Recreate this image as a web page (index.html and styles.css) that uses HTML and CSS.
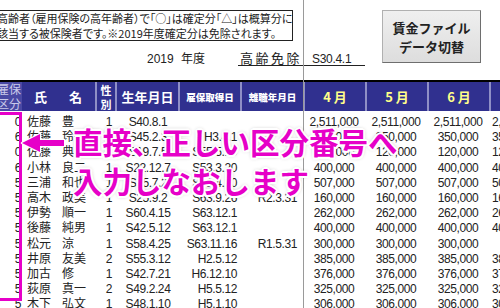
FILE: index.html
```html
<!DOCTYPE html>
<html lang="ja">
<head>
    <meta charset="UTF-8">
    <meta name="viewport" content="width=device-width, initial-scale=1.0">
    <title>賃金台帳</title>
    <link rel="stylesheet" href="styles.css">
</head>
<body>
    <div class="sheet">
        <div class="top">
            <div class="top-left">
                <div class="note">高齢者（雇用保険の高年齢者）で「○」は確定分「△」は概算分に<br>該当する被保険者です。※2019年度確定分は免除されます。</div>
                <div class="info">
                    <span class="year">2019 年度</span>
                    <span class="cell label">高齢免除</span>
                    <span class="cell value">S30.4.1</span>
                </div>
            </div>
            <button class="switch-btn">賃金ファイル<br>データ切替</button>
        </div>

        <div class="table">
            <div class="row head">
                <div class="h kbn">雇保<br>区分</div>
                <div class="h name-h"><span>氏</span><span>名</span></div>
                <div class="h sep sex-h">性<br>別</div>
                <div class="h sep">生年月日</div>
                <div class="h sep small">雇保取得日</div>
                <div class="h sep small">離職年月日</div>
                <div class="h sep month">4月</div>
                <div class="h sep month">5月</div>
                <div class="h sep month">6月</div>
                <div class="h sep month">7月</div>
            </div>
            <div class="rows" id="rows">
                <!-- se llena con JavaScript -->
            </div>
        </div>

        <div class="split"></div>
        <div class="mark"></div>
        <svg class="arrow" width="50" height="26" viewBox="0 0 50 26">
            <path d="M2 13 L20 4 L20 10 L44 10 L44 16 L20 16 L20 22 Z" fill="#e600c8" stroke="#fff" stroke-width="2.5" stroke-linejoin="round" paint-order="stroke"/>
        </svg>
        <div class="callout">直接、正しい区分番号へ<br>入力しなおします</div>
    </div>

    <script>
        const staff = [
            ['0', '佐藤', '豊', '1', 'S40.8.1', '', '', '2,511,000'],
            ['6', '佐藤', '玲子', '2', 'S45.2.3', 'H3.4.1', '', '350,000'],
            ['0', '佐藤', '典子', '2', 'S19.7.5', 'S55.5.10', '', '120,000'],
            ['6', '小林', '良二', '1', 'S22.12.7', 'S53.3.20', '', '400,000'],
            ['5', '三浦', '和也', '1', 'S35.7.2', 'S61.4.20', '', '507,000'],
            ['5', '高木', '政美', '1', 'S25.9.2', 'S63.9.26', 'R2.3.31', '160,000'],
            ['5', '伊勢', '順一', '1', 'S60.4.15', 'S63.12.1', '', '262,000'],
            ['5', '後藤', '純男', '1', 'S42.5.12', 'S63.12.1', '', '400,000'],
            ['5', '松元', '涼', '1', 'S58.4.25', 'S63.11.16', 'R1.5.31', '300,000'],
            ['5', '井原', '友美', '2', 'S55.3.12', 'H2.5.12', '', '385,000'],
            ['5', '加古', '修', '1', 'S42.7.21', 'H6.12.10', '', '376,000'],
            ['5', '荻原', '真一', '2', 'S49.2.24', 'H5.5.12', '', '325,000'],
            ['5', '木下', '弘文', '1', 'S48.1.10', 'H5.1.10', '', '306,000']
        ];

        const container = document.getElementById('rows');
        staff.forEach(s => {
            const row = document.createElement('div');
            row.className = 'row';
            // 離職していれば4か月目は空欄
            const last = s[6] === 'R1.5.31' ? '' : s[7];
            row.innerHTML = `
                <div class="c kbn">${s[0]}</div>
                <div class="c name"><span class="sei">${s[1]}</span><span>${s[2]}</span></div>
                <div class="c sex">${s[3]}</div>
                <div class="c birth">${s[4]}</div>
                <div class="c get">${s[5]}</div>
                <div class="c leave">${s[6]}</div>
                <div class="c m">${s[7]}</div>
                <div class="c m">${s[7]}</div>
                <div class="c m">${s[7]}</div>
                <div class="c m-last">${last}</div>
            `;
            container.appendChild(row);
        });
    </script>
</body>
</html>
```

FILE: styles.css
```css
body {
    margin: 0;
    width: 500px;
    height: 308px;
    overflow: hidden;
    background-color: #fff;
    font-family: "Liberation Sans", "Noto Sans CJK JP", sans-serif;
    color: #222;
}

.sheet {
    position: relative;
    height: 308px;
}

.top {
    display: flex;
    height: 80px;
}

.top-left {
    width: 382px;
}

.note {
    margin: 10px 0 0 -12px;
    width: 305px;
    height: 31px;
    box-sizing: border-box;
    border: 1px solid #222;
    padding-left: 8px;
    font-family: "Noto Sans CJK JP", sans-serif;
    font-size: 11px;
    line-height: 14.5px;
    white-space: nowrap;
    font-feature-settings: "palt";
}

.info {
    display: flex;
    align-items: flex-end;
    margin-top: 10px;
    height: 15px;
    font-size: 12px;
    white-space: nowrap;
}

.year {
    margin-left: 147px;
    width: 91px;
    word-spacing: 4px;
    font-size: 12px;
}

.cell {
    height: 14px;
    line-height: 14px;
    border-bottom: 1px solid #222;
}

.label {
    width: 65px;
    padding-left: 2px;
    box-sizing: border-box;
    font-size: 13px;
    letter-spacing: 2.5px;
}

.value {
    width: 62px;
    padding-left: 9px;
    box-sizing: border-box;
    letter-spacing: -0.3px;
}

.switch-btn {
    width: 99px;
    height: 53px;
    margin-top: 10px;
    padding: 0;
    background: linear-gradient(#efefef, #dddddd);
    border: 1px solid #b0b0b0;
    border-right-color: #6e6e6e;
    border-bottom-color: #6e6e6e;
    font-family: "Noto Sans CJK JP", sans-serif;
    font-weight: 700;
    font-size: 13px;
    line-height: 19px;
    color: #222;
}

.table {
    margin-left: -8px;
    border-top: 2px solid #000;
}

.row {
    display: grid;
    grid-template-columns: 30px 73px 20px 63px 62px 63px 62px 62px 62px 62px;
    height: 15.2px;
}

.head {
    height: 29px;
    background-color: #30308f;
    color: #fff;
}

.h {
    display: flex;
    align-items: center;
    justify-content: center;
    font-family: "Noto Sans CJK JP", sans-serif;
    font-weight: 700;
    font-size: 13px;
    white-space: nowrap;
    box-sizing: border-box;
}

.h.sep {
    border-left: 2px solid #8f8fc6;
}

.h.kbn {
    justify-content: flex-end;
    text-align: right;
    padding-right: 1px;
    background-color: #4949a4;
    color: #c9c9ea;
    font-weight: 400;
    font-size: 12px;
    line-height: 14.5px;
}

.name-h {
    justify-content: flex-start !important;
    gap: 22px;
    padding-left: 12px;
}

.sex-h {
    font-size: 11px;
    line-height: 14px;
    text-align: center;
}

.h.small {
    font-size: 9.5px;
    font-weight: 900;
}

.h.month {
    color: #ffff8a;
    font-size: 13px;
    letter-spacing: 3px;
    padding-left: 3px;
}

.rows {
    padding-top: 4px;
}

.c {
    font-size: 12px;
    line-height: 15.2px;
    white-space: nowrap;
    letter-spacing: -0.4px;
    box-sizing: border-box;
}

.c.kbn {
    text-align: right;
    padding-right: 1px;
}

.c.name {
    display: flex;
    padding-left: 5px;
    letter-spacing: 0;
}

.sei {
    width: 35px;
}

.c.sex {
    text-align: right;
    padding-right: 3px;
}

.c.birth {
    text-align: center;
    padding-left: 3px;
}

.c.get {
    text-align: right;
    padding-right: 3px;
    direction: rtl;
}

.c.leave {
    text-align: right;
    padding-right: 6px;
}

.c.m {
    text-align: center;
}

.c.m-last {
    padding-left: 3px;
}

.split {
    position: absolute;
    left: 303px;
    top: 0;
    bottom: 0;
    width: 1px;
    background-color: #9a9a9a;
}

.mark {
    position: absolute;
    left: -10px;
    top: 112px;
    width: 32px;
    height: 189px;
    box-sizing: border-box;
    border: 3px solid #e600c8;
}

.arrow {
    position: absolute;
    left: 20px;
    top: 130px;
}

.callout {
    position: absolute;
    left: 73px;
    top: 122px;
    font-family: "Noto Sans CJK JP", sans-serif;
    font-weight: 700;
    font-size: 29.5px;
    line-height: 39px;
    color: #e600c8;
    white-space: nowrap;
    text-shadow: 2px 0 #fff, -2px 0 #fff, 0 2px #fff, 0 -2px #fff,
        1.5px 1.5px #fff, -1.5px 1.5px #fff, 1.5px -1.5px #fff, -1.5px -1.5px #fff,
        0 0 4px rgba(0, 0, 0, 0.45);
}
```
